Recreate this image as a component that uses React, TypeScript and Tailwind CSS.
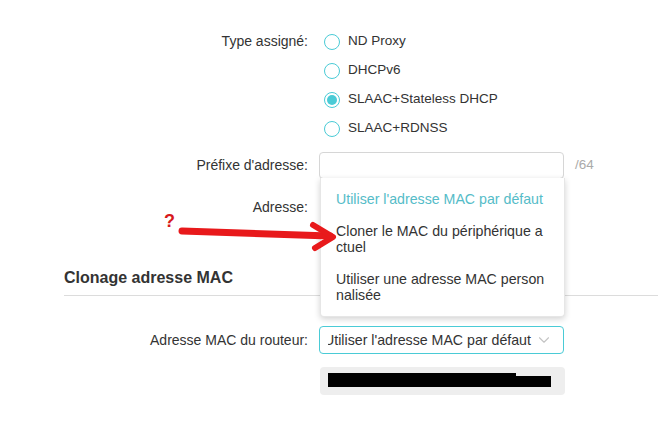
import React from 'react';
import { ChevronDown } from 'lucide-react';

const radioOptions = [
  { label: 'ND Proxy', checked: false },
  { label: 'DHCPv6', checked: false },
  { label: 'SLAAC+Stateless DHCP', checked: true },
  { label: 'SLAAC+RDNSS', checked: false },
];

const Radio = ({ checked }: { checked: boolean }) => (
  <span className="ml-[5px] flex h-[16px] w-[16px] items-center justify-center rounded-full border-[1.5px] border-[#4acbd6] bg-white">
    {checked && <span className="h-[10px] w-[10px] rounded-full bg-[#4acbd6]" />}
  </span>
);

const Label = ({ children }: { children: React.ReactNode }) => (
  <div className="w-[309px] shrink-0 pr-[1px] text-right text-[14px] text-[#333]">{children}</div>
);

export default function App() {
  return (
    <div className="relative h-[424px] w-[658px] overflow-hidden bg-white font-['Liberation_Sans',Arial,sans-serif] text-[#333]">
      <div className="pt-[27px]">
        {/* Type assigné */}
        <div className="flex items-start">
          <Label>
            <div className="flex h-[29px] items-center justify-end">Type assigné:</div>
          </Label>
          <div className="ml-[10px] flex flex-col">
            {radioOptions.map((opt) => (
              <div key={opt.label} className="flex h-[29px] items-center">
                <Radio checked={opt.checked} />
                <span className="ml-[8px] text-[13.5px] text-[#333]">{opt.label}</span>
              </div>
            ))}
          </div>
        </div>

        {/* Préfixe */}
        <div className="mt-[9px] flex items-center">
          <Label>Préfixe d'adresse:</Label>
          <div className="ml-[10px] h-[27px] w-[245px] rounded-[4px] border border-[#d6d6d6] bg-white" />
          <span className="ml-[11px] text-[13.5px] text-[#aaa]">/64</span>
        </div>

        {/* Adresse */}
        <div className="mt-[14px] flex h-[28px] items-center">
          <Label>Adresse:</Label>
        </div>

        {/* Clonage adresse MAC */}
        <div className="ml-[64px] mt-[47px] border-b border-[#dcdcdc] pb-[7px]">
          <h2 className="text-[16px] leading-[20px] font-bold text-[#333]">Clonage adresse MAC</h2>
        </div>

        <div className="mt-[30px] flex items-center">
          <Label>Adresse MAC du routeur:</Label>
          <div className="ml-[10px] flex h-[28px] w-[245px] items-center rounded-[4px] border border-[#4acbd6] bg-white pr-[10px]">
            <div className="ml-[8px] flex-1 overflow-hidden whitespace-nowrap">
              <span className="ml-[-4px] text-[14.2px] text-[#333]">Utiliser l'adresse MAC par défaut</span>
            </div>
            <ChevronDown size={18} strokeWidth={1.5} className="text-[#c4c4c4]" />
          </div>
        </div>

        <div className="mt-[13px] flex items-center">
          <div className="w-[309px] shrink-0" />
          <div className="ml-[11px] flex h-[28px] w-[245px] items-start rounded-[4px] bg-[#eeeeee] pl-[8px] pt-[6px]">
            <div className="h-[14px] w-[188px] bg-black" />
            <div className="mt-[3px] h-[11px] w-[35px] bg-black" />
          </div>
        </div>
      </div>

      {/* Dropdown menu */}
      <div className="absolute left-[320px] top-[178px] w-[245px] rounded-b-[4px] border border-t-0 border-[#e6e6e6] bg-white py-[5px] text-[14.2px] leading-[16px] shadow-[0_2px_6px_rgba(0,0,0,0.18)]">
        <div className="px-[15px] py-[8px] text-[#55bcc8]">Utiliser l'adresse MAC par défaut</div>
        <div className="px-[15px] py-[8px] text-[#333]">
          Cloner le MAC du périphérique a
          <br />
          ctuel
        </div>
        <div className="px-[15px] py-[8px] text-[#333]">
          Utiliser une adresse MAC person
          <br />
          nalisée
        </div>
      </div>

      {/* Annotation */}
      <span className="absolute left-[164px] top-[211px] text-[18px] font-bold leading-[20px] text-[#d7191c]">?</span>
      <svg className="absolute left-0 top-0" width="658" height="424" viewBox="0 0 658 424">
        <line x1="182" y1="231" x2="330" y2="236" stroke="#e8191b" strokeWidth="7" strokeLinecap="round" />
        <polyline
          points="313,225 333,237 315,248"
          fill="none"
          stroke="#e8191b"
          strokeWidth="6"
          strokeLinecap="round"
          strokeLinejoin="round"
        />
      </svg>
    </div>
  );
}
